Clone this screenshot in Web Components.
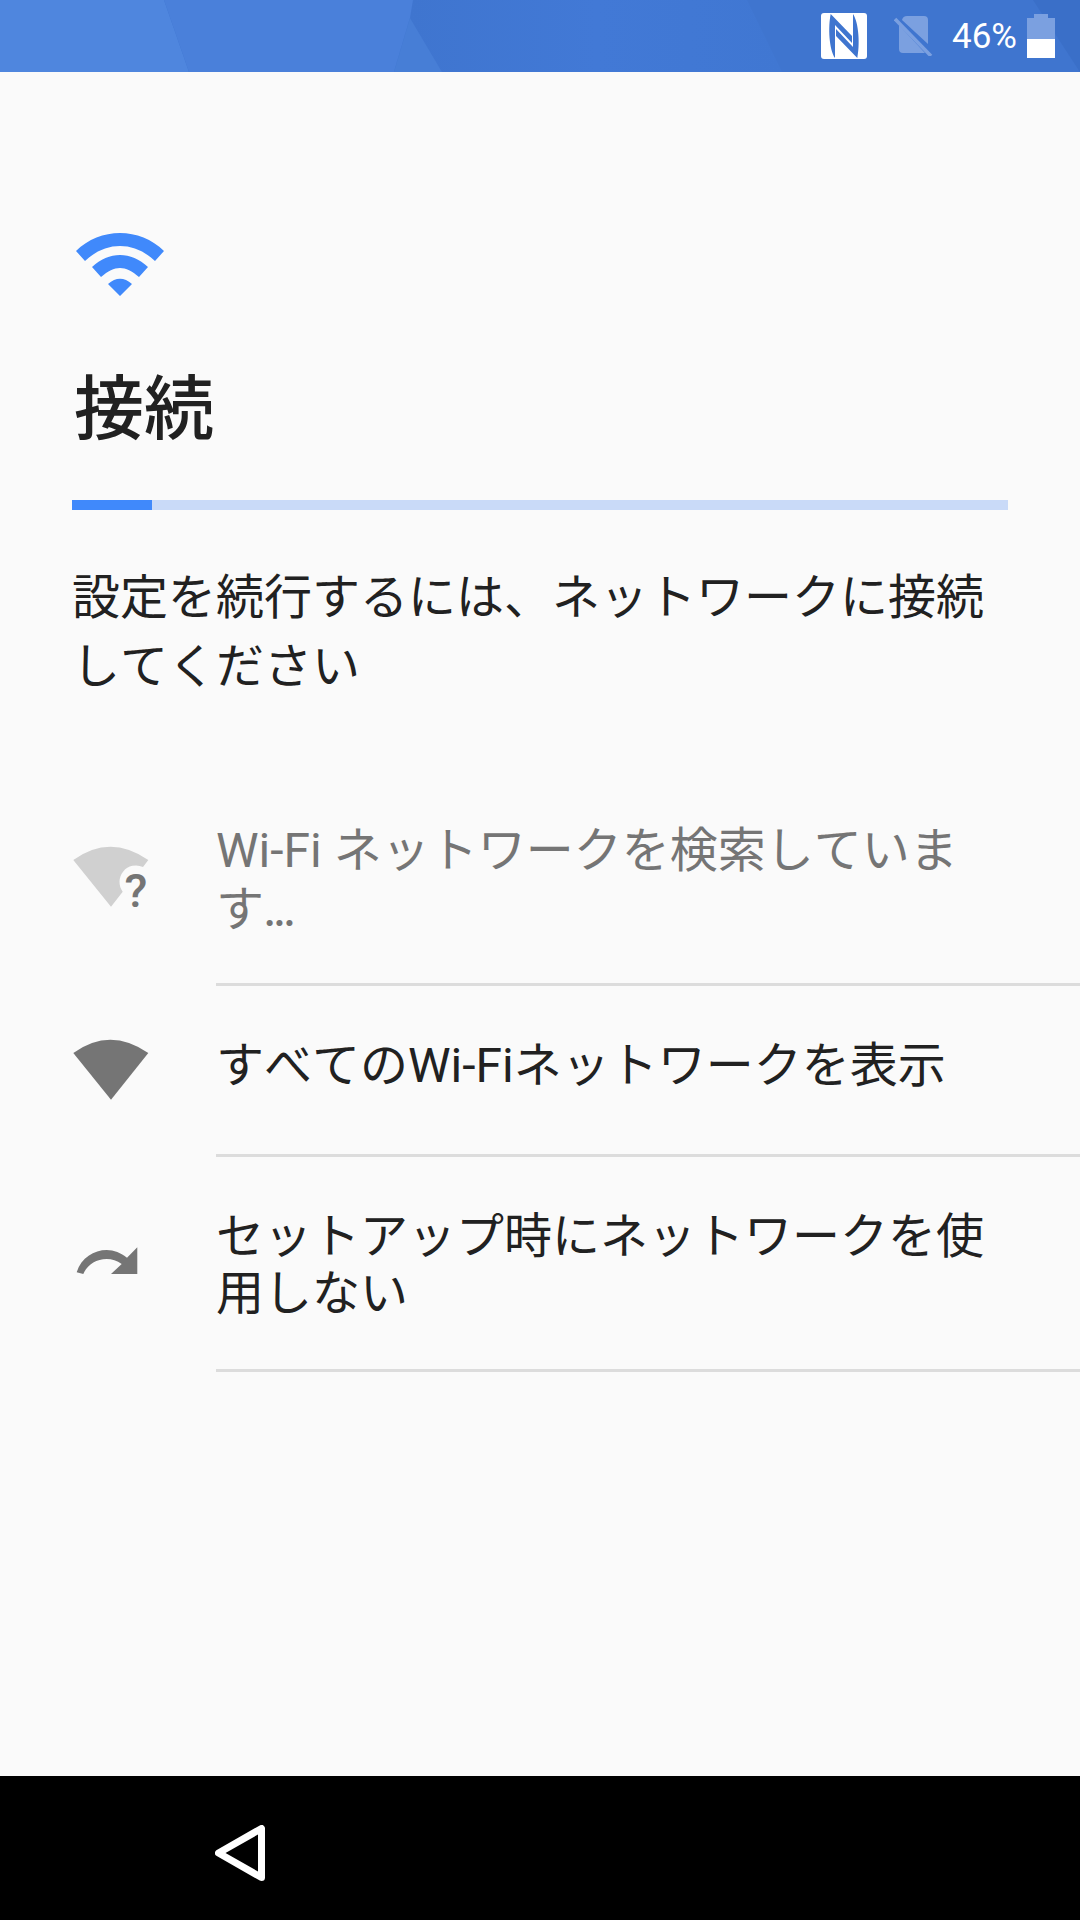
<!DOCTYPE html>
<html lang="ja"><head><meta charset="utf-8">
<style>
html,body{margin:0;padding:0;background:#fafafa}
body{width:1080px;height:1920px;font-family:Roboto,"Noto Sans CJK JP",sans-serif;display:flex;flex-direction:column;font-kerning:none}
.dots{font-family:Lato,Roboto,sans-serif;letter-spacing:-1.5px}
</style></head><body>
<status-bar></status-bar>
<setup-page>
  <svg slot="icon" width="90" height="66" viewBox="0 0 90 66"><path fill="#4089fb" d="M0 19 C24 -5 64 -5 88 19 L79 29 C58 9 30 9 9 29 Z M16 35 C33 19 55 19 72 35 L63 45 C49 33 39 33 25 45 Z M32 52 C40 45 48 45 56 52 L44 64 Z"/></svg>
  <span slot="title">接続</span>
  <span slot="desc">設定を続行するには、ネットワークに接続してください</span>
  <option-row muted>
    <svg slot="icon" width="80" height="80" viewBox="0 -8 80 80" style="overflow:visible"><path fill="#d0d0d0" d="M1.3 17 Q38 -9.6 76.3 17 L71 24 A16.5 16.5 0 0 0 50.7 48.7 L39 63.7 Z"/><text x="64" y="63.5" font-family="Roboto,sans-serif" font-weight="500" text-anchor="middle" fill="#757575" style="font-size:47px">?</text></svg>
    <span>Wi-Fi ネットワークを検索していま</span><br><span>す</span><span class="dots">...</span>
  </option-row>
  <option-row>
    <svg slot="icon" width="80" height="64" viewBox="0 0 80 64"><path fill="#757575" d="M1.3 17 Q38 -9.6 76.3 17 L39 63.7 Z"/></svg>
    すべてのWi-Fiネットワークを表示
  </option-row>
  <option-row>
    <svg slot="icon" width="80" height="64" viewBox="0 0 80 64"><path fill="#757575" d="M4.7 43.3 C9 29 22 21 34.7 21 C42 21 49 24 55 28.7 L65.3 18.3 V45 H39 L49.7 35 C45 31.5 40 30 34.7 30 C24 30 15 36 11.3 45 Z"/></svg>
    セットアップ時にネットワークを使用しない
  </option-row>
</setup-page>
<nav-bar></nav-bar>
<script>
function def(name,html){customElements.define(name,class extends HTMLElement{constructor(){super();this.attachShadow({mode:'open'}).innerHTML=html}})}
def('status-bar',`<style>
:host{display:flex;flex:none;height:72px;position:relative;background:#3f75cf;color:#fff;justify-content:flex-end;align-items:center;overflow:hidden}
.bg{position:absolute;left:0;top:0}
.c{position:relative;display:flex;align-items:center}
.p{font:400 35px Roboto,sans-serif;margin:0 10px 0 19px}
</style>
<svg class="bg" width="1080" height="72"><defs><linearGradient id="g" x1="0" x2="1"><stop offset="0" stop-color="#3f75cf"/><stop offset=".5" stop-color="#4279d6"/><stop offset="1" stop-color="#4077d2"/></linearGradient></defs><path fill="url(#g)" d="M410 18L413 0H747L782 72H442Z"/><path fill="#4f86de" d="M0 0H164L189 72H0Z"/><path fill="#4a80da" d="M164 0H413L410 18L394 72H189Z"/><path fill="#477ed6" d="M410 18L442 72H394Z"/><path fill="#3a6fc8" d="M1033 0H1080V72Z"/></svg>
<div class="c">
<svg width="46" height="46" viewBox="0 0 46 46" style="margin-right:27px"><rect width="46" height="46" rx="3" fill="#fff"/><path fill="#3f75cf" d="M9.7 1L31 23V30L14 12V45C8 36 7 14 9.7 1Z M36.3 45L15 23V16L32 34V1C38 10 39 32 36.3 45Z"/></svg>
<svg width="39" height="40" viewBox="0 0 39 40"><path fill="#7ba0e0" d="M13 0H30Q34 0 34 4V28L8 4Q9 0 13 0ZM5 9 L31 37H9Q5 37 5 33Z"/><path stroke="#7ba0e0" stroke-width="3.5" d="M1 3L37 40"/></svg>
<span class="p">46%</span>
<svg width="28" height="44" viewBox="0 0 28 44" style="margin-right:25px"><path fill="#7ba0e0" d="M7 0H21V4H28V25H0V4H7Z"/><rect y="25" width="28" height="19" fill="#fff"/></svg>
</div>`);
def('setup-page',`<style>
:host{display:flex;flex-direction:column;flex:1;background:#fafafa}
.head{padding:160px 72px 0}
.ico{height:66px;padding-left:4px}
.t{font-size:70px;line-height:96px;color:#212121;margin-top:64px;font-weight:500;padding-left:2px}
.bar{height:10px;background:#c9daf8;margin:42px 0 0}
.bar i{display:block;width:80px;height:100%;background:#4089fb}
.d{font-size:48px;line-height:69px;color:#212121;margin-top:53px}
.list{margin-top:70px}
</style>
<div class="head"><div class="ico"><slot name="icon"></slot></div>
<div class="t"><slot name="title"></slot></div>
<div class="bar"><i></i></div>
<div class="d"><slot name="desc"></slot></div></div>
<div class="list"><slot></slot></div>`);
def('option-row',`<style>
:host{display:flex;align-items:stretch;color:#212121}
:host([muted]){color:#757575}
.i{flex:none;width:72px;margin:0 72px;padding-bottom:8px;display:flex;align-items:center}
::slotted(svg){flex:none}
.b{flex:1;border-bottom:3px solid #dcdcdc;padding:51px 72px 47px 0;font-size:48px;line-height:57px}
:host([muted]) .b{padding-bottom:45px}
:host(:nth-of-type(2)) .b{padding-bottom:60px}
</style><div class="i"><slot name="icon"></slot></div><div class="b"><slot></slot></div>`);
def('nav-bar',`<style>
:host{display:flex;flex:none;height:144px;background:#000;align-items:center;padding:10px 0 0 215px;box-sizing:border-box}
</style><svg width="50" height="56" viewBox="0 0 50 56"><path fill="none" stroke="#fff" stroke-width="7" stroke-linejoin="round" d="M3.5 28L46.5 3.5V52.5Z"/></svg>`);
</script>
</body></html>
